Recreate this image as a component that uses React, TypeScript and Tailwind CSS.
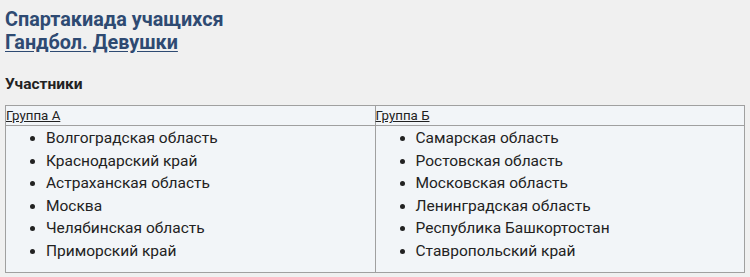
const groupA = [
  'Волгоградская область',
  'Краснодарский край',
  'Астраханская область',
  'Москва',
  'Челябинская область',
  'Приморский край',
];

const groupB = [
  'Самарская область',
  'Ростовская область',
  'Московская область',
  'Ленинградская область',
  'Республика Башкортостан',
  'Ставропольский край',
];

function TeamList({ items }: { items: string[] }) {
  return (
    <ul className="list-disc pl-10 mt-[1px] mb-[10px] text-[15.5px] leading-[22.5px] text-[#222]">
      {items.map((t) => (
        <li key={t}>{t}</li>
      ))}
    </ul>
  );
}

export default function App() {
  return (
    <div className="w-[750px] h-[277px] bg-[#f0f0f0] px-[5px] pt-[8px] font-['Roboto',sans-serif] overflow-hidden">
      <h1 className="text-[19.8px] leading-[23px] font-bold text-[#2e4a72]">Спартакиада учащихся</h1>
      <a href="#" className="block w-fit text-[19.8px] leading-[23px] font-bold text-[#2e4a72] underline underline-offset-2">
        Гандбол. Девушки
      </a>
      <h3 className="mt-[21px] text-[15.5px] leading-[18px] font-bold text-[#222]">Участники</h3>

      <table className="mt-[12px] w-[740px] border-collapse bg-[#f2f5f8] table-fixed">
        <thead>
          <tr>
            <th className="w-1/2 border border-[#a0a0a0] text-left font-normal text-[13.3px] leading-[19px] p-0">
              <a href="#" className="underline text-[#222]">Группа А</a>
            </th>
            <th className="w-1/2 border border-[#a0a0a0] text-left font-normal text-[13.3px] leading-[19px] p-0">
              <a href="#" className="underline text-[#222]">Группа Б</a>
            </th>
          </tr>
        </thead>
        <tbody>
          <tr>
            <td className="border border-[#a0a0a0] align-top p-0">
              <TeamList items={groupA} />
            </td>
            <td className="border border-[#a0a0a0] align-top p-0">
              <TeamList items={groupB} />
            </td>
          </tr>
        </tbody>
      </table>
    </div>
  );
}
